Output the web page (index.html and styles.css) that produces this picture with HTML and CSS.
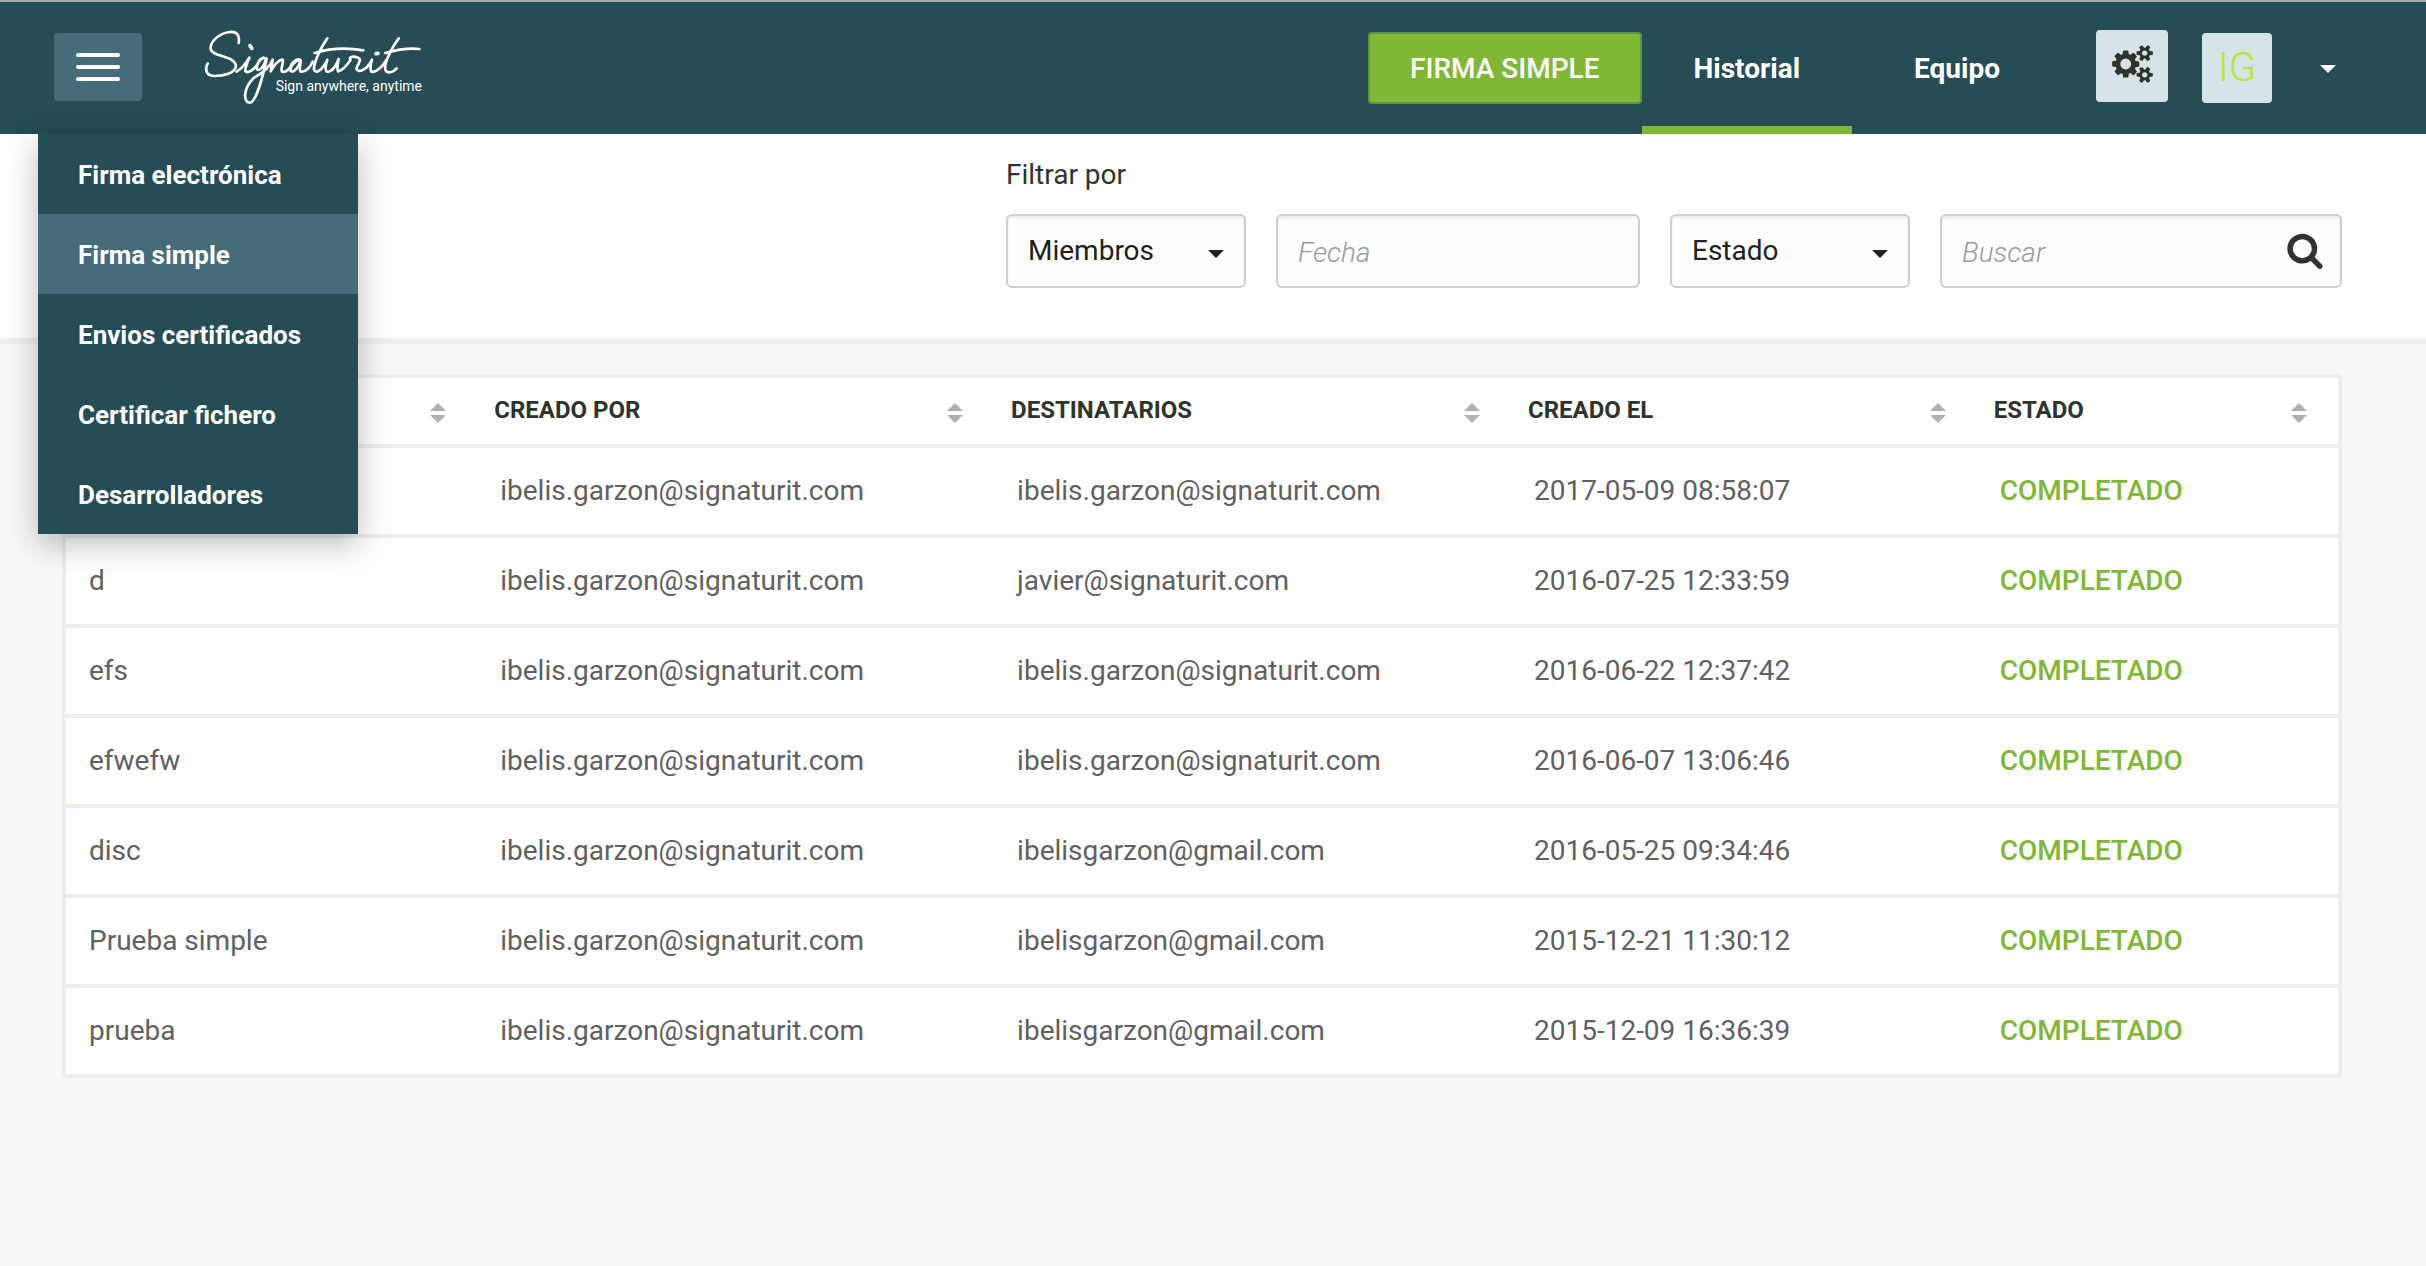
FILE: index.html
```html
<!DOCTYPE html>
<html lang="es">
<head>
<meta charset="utf-8">
<meta name="viewport" content="width=device-width, initial-scale=1">
<title>Signaturit - Historial</title>
<link rel="stylesheet" href="styles.css">
</head>
<body>
<svg class="sprite" aria-hidden="true">
  <symbol id="caret" viewBox="0 0 16 8"><path d="M0 0h16l-8 8z"/></symbol>
  <symbol id="sort" viewBox="0 0 16 20"><path d="M0 8h16l-8-8zM0 12h16l-8 8z"/></symbol>
</svg>

<header class="topbar">
  <button class="menu-toggle" type="button" aria-label="Menú" aria-expanded="true">
    <span class="bar"></span><span class="bar"></span><span class="bar"></span>
  </button>
  <a class="brand" href="#" aria-label="Signaturit">
    <svg class="wordmark" viewBox="0 0 660 225" aria-hidden="true">
      <path d="M104 42C108 18 98 6 76 9C44 14 18 38 20 60C24 84 90 78 96 110C94 134 58 141 32 141C6 141 2 122 11 103"/>
      <path d="M98 128C112 120 126 102 136 86C130 102 122 118 124 127C132 134 150 122 160 106C164 92 174 84 186 88C182 112 168 126 160 122C154 116 164 92 178 86"/>
      <path d="M188 90C178 136 156 220 138 221C116 220 118 176 150 146C172 134 196 118 206 92C204 108 202 120 200 127C212 106 226 92 236 92C240 100 228 122 234 128C246 132 258 118 264 104C272 92 284 88 290 94C284 118 268 132 260 126C256 114 274 92 290 94C290 110 284 122 290 128C306 130 320 112 326 98"/>
      <path d="M370 28C356 48 328 98 330 122C338 140 362 112 370 92C364 112 362 124 368 128C384 130 398 108 404 90C400 108 398 120 402 127C416 124 430 108 440 92C432 84 446 80 462 86C474 92 464 102 458 116C454 132 486 130 504 92C500 106 496 120 502 128C516 132 538 110 546 94"/>
      <path d="M332 72C370 60 420 54 478 64"/>
      <path d="M584 28C566 52 538 104 544 122C550 136 568 130 578 118"/>
      <path d="M544 72C572 64 606 56 646 60"/>
      <path d="M138 50l5 8M516 74l6 -1" class="dot"/>
    </svg>
    <span class="tagline">Sign anywhere, anytime</span>
  </a>

  <nav class="main-nav" aria-label="Principal">
    <button class="primary" type="button">FIRMA SIMPLE</button>
    <a class="tab tab-active" href="#">Historial</a>
    <a class="tab" href="#">Equipo</a>
  </nav>
  <div class="account">
    <button class="square settings" type="button" aria-label="Configuración">
      <svg width="41" height="38" viewBox="0 0 1920 1792" aria-hidden="true"><path d="M896 896q0-106-75-181t-181-75-181 75-75 181 75 181 181 75 181-75 75-181zm768 512q0-52-38-90t-90-38-90 38-38 90q0 53 37.500 90.500t90.500 37.500 90.500-37.500 37.500-90.500zm0-1024q0-52-38-90t-90-38-90 38-38 90q0 53 37.500 90.500t90.500 37.500 90.500-37.500 37.500-90.500zm-384 421v185q0 10-7 19.500t-16 10.500l-155 24q-11 35-32 76 34 48 90 115 7 11 7 20 0 12-7 19-23 30-82.500 89.500t-78.500 59.500q-11 0-21-7l-115-90q-37 19-77 31-11 108-23 155-7 24-30 24h-186q-11 0-20-7.500t-10-17.500l-23-153q-34-10-75-31l-118 89q-7 7-20 7-11 0-21-8-144-133-144-160 0-9 7-19 10-14 41-53t47-61q-23-44-35-82l-152-24q-10-1-17-9.500t-7-19.500v-185q0-10 7-19.500t16-10.500l155-24q11-35 32-76-34-48-90-115-7-11-7-20 0-12 7-20 22-30 82-89t79-59q11 0 21 7l115 90q34-18 77-32 11-108 23-154 7-24 30-24h186q11 0 20 7.500t10 17.500l23 153q34 10 75 31l118-89q8-7 20-7 11 0 21 8 144 133 144 160 0 8-7 19-12 16-42 54t-45 60q23 48 34 82l152 23q10 2 17 10.500t7 19.500zm640 533v140q0 16-149 31-12 27-30 52 51 113 51 138 0 4-4 7-122 71-124 71-8 0-46-47t-52-68q-20 2-30 2t-30-2q-14 21-52 68t-46 47q-2 0-124-71-4-3-4-7 0-25 51-138-18-25-30-52-149-15-149-31v-140q0-16 149-31 13-29 30-52-51-113-51-138 0-4 4-7 4-2 35-20t59-34 30-16q8 0 46 46.500t52 67.500q20-2 30-2t30 2q51-71 92-112l6-2q4 0 124 70 4 3 4 7 0 25-51 138 17 23 30 52 149 15 149 31zm0-1024v140q0 16-149 31-12 27-30 52 51 113 51 138 0 4-4 7-122 71-124 71-8 0-46-47t-52-68q-20 2-30 2t-30-2q-14 21-52 68t-46 47q-2 0-124-71-4-3-4-7 0-25 51-138-18-25-30-52-149-15-149-31v-140q0-16 149-31 13-29 30-52-51-113-51-138 0-4 4-7 4-2 35-20t59-34 30-16q8 0 46 46.500t52 67.500q20-2 30-2t30 2q51-71 92-112l6-2q4 0 124 70 4 3 4 7 0 25-51 138 17 23 30 52 149 15 149 31z"/></svg>
    </button>
    <span class="square avatar">IG</span>
    <button class="account-toggle" type="button" aria-label="Cuenta"><svg width="16" height="8"><use href="#caret"/></svg></button>
  </div>

  <nav class="dropdown" aria-label="Productos">
    <a href="#">Firma electrónica</a>
    <a href="#" class="selected">Firma simple</a>
    <a href="#">Envios certificados</a>
    <a href="#">Certificar fichero</a>
    <a href="#">Desarrolladores</a>
  </nav>
</header>

<form class="filters">
  <fieldset class="filter-group">
    <legend>Filtrar por</legend>
    <div class="filter-row">
      <div class="field">
        <select aria-label="Miembros"><option>Miembros</option></select>
        <svg class="field-icon" width="16" height="8"><use href="#caret"/></svg>
      </div>
      <div class="field field-date">
        <input type="text" placeholder="Fecha" aria-label="Fecha">
      </div>
      <div class="field">
        <select aria-label="Estado"><option>Estado</option></select>
        <svg class="field-icon" width="16" height="8"><use href="#caret"/></svg>
      </div>
      <div class="field field-search">
        <input type="text" placeholder="Buscar" aria-label="Buscar">
        <button class="search-button" type="submit" aria-label="Buscar">
          <svg width="38" height="38" viewBox="0 0 1792 1792" aria-hidden="true"><path d="M1216 832q0-185-131.500-316.500t-316.500-131.500-316.500 131.500-131.500 316.500 131.500 316.500 316.500 131.500 316.500-131.500 131.500-316.500zm512 832q0 52-38 90t-90 38q-54 0-90-38l-343-342q-179 124-399 124-143 0-273.500-55.500t-225-150-150-225-55.500-273.500 55.500-273.500 150-225 225-150 273.500-55.500 273.500 55.500 225 150 150 225 55.500 273.500q0 220-124 399l343 343q37 37 37 90z"/></svg>
        </button>
      </div>
    </div>
  </fieldset>
</form>

<main class="content">
  <table class="history">
    <colgroup><col class="c-name"><col class="c-mail"><col class="c-mail"><col class="c-date"><col class="c-state"></colgroup>
    <thead>
      <tr>
        <th scope="col" aria-label="Nombre"><div class="head"><span></span><svg width="16" height="20"><use href="#sort"/></svg></div></th>
        <th scope="col"><div class="head"><span>CREADO POR</span><svg width="16" height="20"><use href="#sort"/></svg></div></th>
        <th scope="col"><div class="head"><span>DESTINATARIOS</span><svg width="16" height="20"><use href="#sort"/></svg></div></th>
        <th scope="col"><div class="head"><span>CREADO EL</span><svg width="16" height="20"><use href="#sort"/></svg></div></th>
        <th scope="col"><div class="head"><span>ESTADO</span><svg width="16" height="20"><use href="#sort"/></svg></div></th>
      </tr>
    </thead>
    <tbody>
      <tr><td></td><td>ibelis.garzon@signaturit.com</td><td>ibelis.garzon@signaturit.com</td><td>2017-05-09 08:58:07</td><td class="done">COMPLETADO</td></tr>
      <tr><td>d</td><td>ibelis.garzon@signaturit.com</td><td>javier@signaturit.com</td><td>2016-07-25 12:33:59</td><td class="done">COMPLETADO</td></tr>
      <tr><td>efs</td><td>ibelis.garzon@signaturit.com</td><td>ibelis.garzon@signaturit.com</td><td>2016-06-22 12:37:42</td><td class="done">COMPLETADO</td></tr>
      <tr><td>efwefw</td><td>ibelis.garzon@signaturit.com</td><td>ibelis.garzon@signaturit.com</td><td>2016-06-07 13:06:46</td><td class="done">COMPLETADO</td></tr>
      <tr><td>disc</td><td>ibelis.garzon@signaturit.com</td><td>ibelisgarzon@gmail.com</td><td>2016-05-25 09:34:46</td><td class="done">COMPLETADO</td></tr>
      <tr><td>Prueba simple</td><td>ibelis.garzon@signaturit.com</td><td>ibelisgarzon@gmail.com</td><td>2015-12-21 11:30:12</td><td class="done">COMPLETADO</td></tr>
      <tr><td>prueba</td><td>ibelis.garzon@signaturit.com</td><td>ibelisgarzon@gmail.com</td><td>2015-12-09 16:36:39</td><td class="done">COMPLETADO</td></tr>
    </tbody>
  </table>
</main>
</body>
</html>
```
FILE: styles.css
```css
:root {
  --teal: #264c55;
  --slate: #466b79;
  --green: #80b735;
  --ink: #2d342c;
  --line: #ebf0eb;
}

* { box-sizing: border-box; }

body {
  margin: 0;
  background: #f8f8f8;
  color: var(--ink);
  font: 400 28px/32px Roboto, "Liberation Sans", sans-serif;
}

button, input, select { font: inherit; color: inherit; margin: 0; }
button { cursor: pointer; border: 0; }
a { color: inherit; text-decoration: none; }
svg { display: block; fill: currentColor; }
.sprite { position: absolute; width: 0; height: 0; }

/* Top bar */
.topbar {
  position: relative;
  z-index: 1;
  display: flex;
  align-items: center;
  height: 134px;
  padding: 0 84px 0 54px;
  border-top: 2px solid #a9a9aa;
  background: var(--teal);
  color: #fff;
}

.menu-toggle {
  display: flex;
  flex-direction: column;
  align-items: center;
  justify-content: center;
  gap: 8px;
  width: 88px;
  height: 68px;
  margin-bottom: 2px;
  padding: 0;
  border-radius: 4px;
  background: var(--slate);
}
.bar { width: 44px; height: 4px; border-radius: 2px; background: #fff; }

.brand { display: grid; margin: 0 0 4px 62px; }
.wordmark { grid-area: 1 / 1; width: 220px; height: 75px; }
.wordmark path {
  fill: none;
  stroke: #fff;
  stroke-width: 8;
  stroke-linecap: round;
  stroke-linejoin: round;
}
.wordmark .dot { stroke-width: 11; }
.tagline {
  grid-area: 1 / 1;
  align-self: end;
  justify-self: end;
  padding: 0 2px 8px 0;
  font-size: 14px;
  line-height: 20px;
}

.main-nav { display: flex; align-items: center; align-self: stretch; margin-left: auto; }
.primary {
  height: 72px;
  padding: 2px 40px 0;
  border: 2px solid #559a3e;
  border-radius: 4px;
  background: var(--green);
  font-weight: 500;
}
.tab {
  display: flex;
  align-items: center;
  align-self: stretch;
  padding: 10px 52px 0;
  border-bottom: 8px solid transparent;
  font-weight: 700;
}
.tab + .tab { margin-left: 10px; }
.tab-active { border-color: var(--green); }

.account { display: flex; align-items: center; margin-left: 44px; }
.square {
  display: flex;
  align-items: center;
  justify-content: center;
  border-radius: 4px;
  background: #d6e3e7;
}
.settings { width: 72px; height: 72px; margin-bottom: 4px; padding: 0 0 4px; color: var(--ink); }
.avatar {
  width: 70px;
  height: 70px;
  margin-left: 34px;
  color: #b8e62a;
  font-size: 40px;
  font-weight: 300;
}
.account-toggle { margin-left: 42px; padding: 18px 6px 16px; background: none; }

/* Product menu */
.dropdown {
  position: absolute;
  top: 100%;
  left: 38px;
  width: 320px;
  background: var(--teal);
  box-shadow: 0 10px 30px rgba(0, 0, 0, .27);
  font-size: 26px;
  font-weight: 700;
}
.dropdown a { display: block; padding: 25px 40px 23px; }
.dropdown .selected { background: var(--slate); }

/* Filters */
.filters {
  display: flex;
  justify-content: flex-end;
  padding: 25px 84px 50px;
  border-bottom: 6px solid var(--line);
  background: #fff;
}
.filter-group { margin: 0; padding: 0; border: 0; min-width: 0; }
.filter-group legend { padding: 0; }
.filter-row { display: flex; gap: 30px; padding-top: 23px; }
.field { display: grid; align-items: center; width: 240px; }
.field-date { width: 364px; }
.field-search { width: 402px; }
.field > select, .field > input {
  grid-area: 1 / 1;
  width: 100%;
  height: 74px;
  padding: 0 20px;
  border: 2px solid #cfcfcf;
  border-radius: 6px;
  background: #fefefe;
  box-shadow: inset 0 2px 3px rgba(0, 0, 0, .08);
  appearance: none;
}
.field > select { color: #1c211c; }
.field > input { padding-top: 2px; }
.field > input::placeholder {
  color: #999;
  font-style: italic;
  font-weight: 300;
  opacity: 1;
}
.field-icon {
  grid-area: 1 / 1;
  justify-self: end;
  margin: 6px 22px 0 0;
  color: #1c211c;
  pointer-events: none;
}
.search-button {
  grid-area: 1 / 1;
  justify-self: end;
  padding: 0 18px 2px;
  background: none;
}

/* History table */
.content { padding: 30px 84px 84px 62px; }
.history {
  width: 100%;
  table-layout: fixed;
  border: 4px solid var(--line);
  border-spacing: 0;
  background: #fff;
}
.c-name { width: 18.1%; }
.c-mail { width: 22.75%; }
.c-date { width: 20.5%; }
.c-state { width: 15.9%; }
.history th {
  height: 66px;
  padding: 0 31px 2px 17px;
  font-size: 24px;
  font-weight: 700;
  text-align: left;
}
.head { display: flex; align-items: center; justify-content: space-between; }
.head svg { color: #b0b0b0; margin-top: 6px; }
.history td {
  height: 90px;
  padding: 0 23px;
  border-top: 4px solid var(--line);
  color: #606060;
}
.history .done { color: var(--green); font-weight: 500; }
```
